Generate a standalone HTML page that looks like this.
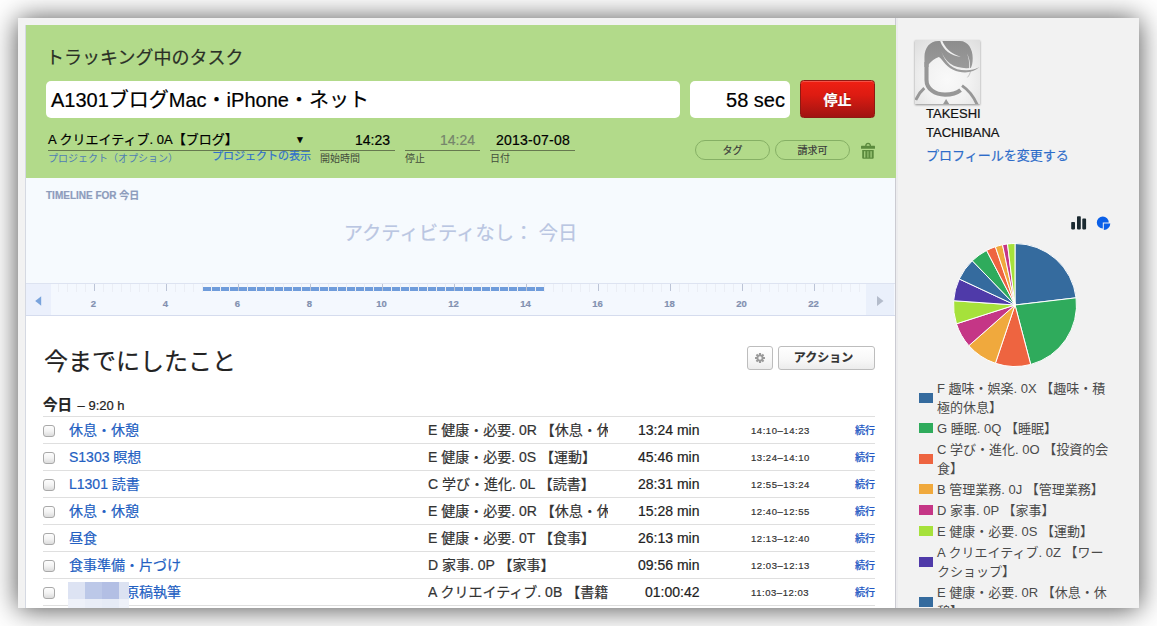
<!DOCTYPE html><html lang="ja"><head><meta charset="utf-8"><title>Toggl</title><style>
*{box-sizing:border-box;margin:0;padding:0}
html,body{width:1157px;height:626px;overflow:hidden;background:#fff}
body{font-family:"Liberation Sans","Noto Sans CJK JP",sans-serif;color:#222;position:relative;-webkit-text-stroke:.2px}
.a{position:absolute;white-space:nowrap}
#win{position:absolute;left:18px;top:18px;width:1121px;height:590px;background:#f2f2f2;box-shadow:0 1px 26px rgba(0,0,0,.7);overflow:hidden}
/* coordinates inside #win are page coords minus 18 -> use inner wrapper shifted */
#pg{position:absolute;left:-18px;top:-18px;width:1157px;height:626px}
#main{position:absolute;left:25px;top:25px;width:870px;height:600px;background:#fff;border-left:1px solid #d5d9e2}
#sep{position:absolute;left:895px;top:18px;width:3px;height:600px;background:#ececee;border-left:1px solid #cbcbd2}
#green{position:absolute;left:26px;top:25px;width:870px;height:153px;background:#b2da8a}
.inp{position:absolute;background:#fff;border-radius:5px;height:37px;top:81px;font-size:20px;line-height:38px;color:#000;white-space:nowrap;overflow:hidden}
.ul{position:absolute;height:1px;background:#66794f;top:150px}
.fld{position:absolute;font-size:14px;line-height:16px;color:#000;text-align:right;white-space:nowrap}
.lbl{position:absolute;font-size:10px;line-height:12px;color:#434c3a;white-space:nowrap;-webkit-text-stroke:0}
.pill{position:absolute;top:140px;height:20px;width:75px;border:1px solid #86b065;border-radius:10px;font-size:10px;line-height:19.5px;text-align:center;color:#3a3a3a}
#tl{position:absolute;left:26px;top:178px;width:869px;height:138px;background:#f6fafe}
#axis{position:absolute;left:26px;top:283px;width:869px;height:33px;background:#f4f8fe;border-top:1px solid #dde3f1;border-bottom:1px solid #d5dcee}
.tk{position:absolute;top:284px;width:1px;height:8px;background:#ebeef5}
.tk.M{height:7px;background:#bcc4d6}
.tn{position:absolute;top:298px;width:30px;text-align:center;font-size:9.5px;line-height:12px;color:#8290b0;font-weight:bold}
.row{position:absolute;left:43px;width:832px;height:27px;border-top:1px solid #dfdfdf}
.cb{position:absolute;left:0;top:8px;width:12px;height:12px;border:1px solid #a9a9a9;border-radius:3px;background:linear-gradient(#fdfdfd,#f3f3f3 50%,#dcdcdc)}
.rt{position:absolute;left:26px;top:0;font-size:14px;line-height:27px;color:#2360c2;white-space:nowrap}
.rp{position:absolute;left:385px;top:0;width:180px;overflow:hidden;font-size:14px;line-height:27px;color:#333;white-space:nowrap}
.rd{position:absolute;left:595px;top:0;font-size:14px;line-height:27px;color:#222;white-space:nowrap}
.rr{position:absolute;left:708px;top:0;font-size:9.5px;letter-spacing:.55px;line-height:27px;color:#333;white-space:nowrap}
.rc{position:absolute;right:0;top:0;font-size:10px;line-height:27px;color:#2459c4;white-space:nowrap;font-weight:500}
.btn{position:absolute;top:346px;height:24px;border:1px solid #bdbdbd;border-radius:3px;background:linear-gradient(#fff,#f7f7f7 60%,#ececec)}
.lg{position:absolute;left:937px;width:176px;font-size:13px;line-height:19px;color:#4a4a4a;-webkit-text-stroke:0;white-space:normal}
.sw{position:absolute;left:919px;width:14px;height:10px}
</style></head><body><div id="win"><div id="pg">
<div id="main"></div><div id="sep"></div>
<div id="green"></div>
<div class="a" style="left:46px;top:46px;font-size:18px;line-height:24px;color:#2a2f26">トラッキング中のタスク</div>
<div class="inp" style="left:46px;width:634px;padding-left:5px">A1301ブログMac・iPhone・ネット</div>
<div class="inp" style="left:690px;width:100px;text-align:right;padding-right:5px">58 sec</div>
<div class="a" style="left:800px;top:80px;width:75px;height:38px;border:1px solid #8e1a12;border-radius:3.5px;box-shadow:inset 0 1px 0 rgba(255,255,255,.22);background:linear-gradient(#f02013,#dc1b12 40%,#a01411);color:#fff;font-weight:bold;font-size:14px;line-height:38px;text-align:center;text-shadow:0 -1px 0 rgba(0,0,0,.3)">停止</div>
<div class="a" style="left:48px;top:132px;font-size:13px;line-height:16px;color:#000">A クリエイティブ. 0A【ブログ】</div>
<div class="a" style="left:295px;top:133px;font-size:10px;line-height:14px;color:#000">▼</div>
<div class="ul" style="left:48px;width:262px"></div>
<div class="lbl" style="left:48px;top:153px;color:#4f7db4">プロジェクト（オプション）</div>
<div class="a" style="left:212px;top:149px;font-size:11px;line-height:14px;color:#2f70cc">プロジェクトの表示</div>
<div class="fld" style="left:320px;top:132px;width:75px;padding-right:5px;color:#000">14:23</div>
<div class="ul" style="left:320px;width:75px"></div>
<div class="lbl" style="left:320px;top:153px">開始時間</div>
<div class="fld" style="left:405px;top:132px;width:75px;padding-right:5px;color:#76856b">14:24</div>
<div class="ul" style="left:405px;width:75px"></div>
<div class="lbl" style="left:405px;top:153px">停止</div>
<div class="fld" style="left:490px;top:132px;width:85px;padding-right:5px;color:#000"><span style="letter-spacing:.25px">2013-07-08</span></div>
<div class="ul" style="left:490px;width:85px"></div>
<div class="lbl" style="left:490px;top:153px">日付</div>
<div class="pill" style="left:695px">タグ</div>
<div class="pill" style="left:775px">請求可</div>
<svg class="a" style="left:861px;top:142px" width="14" height="18" viewBox="0 0 14 18"><g fill="#5b8a3d"><path d="M4.2 4.2V3.6C4.2 2 5.4.8 7.1.8S10 2 10 3.6V4.2H8.6V3.6C8.6 2.7 8 2.2 7.1 2.2S5.6 2.7 5.6 3.6V4.2Z"/><rect x="0" y="3.8" width="14" height="2.9" rx=".5"/><path d="M1.2 8.1H12.7V15.7A1 1 0 0 1 11.7 16.7H2.2A1 1 0 0 1 1.2 15.7Z"/></g><g fill="#a4cf7e"><rect x="3.1" y="9.2" width="1.25" height="6.4"/><rect x="6.3" y="9.2" width="1.25" height="6.4" fill="#93bf70"/><rect x="9.45" y="9.2" width="1.25" height="6.4"/></g></svg>
<div id="tl"></div><div id="axis"></div>
<div class="a" style="left:46px;top:190px;font-size:10px;line-height:12px;font-weight:bold;color:#8d9cbc">TIMELINE FOR 今日</div>
<div class="a" style="left:26px;top:221px;width:869px;text-align:center;font-size:19.3px;line-height:26px;color:#bac6e2">アクティビティなし： 今日</div>
<div class="tk" style="left:58px"></div>
<div class="tk" style="left:67px"></div>
<div class="tk" style="left:76px"></div>
<div class="tk" style="left:85px"></div>
<div class="tk M" style="left:94px"></div>
<div class="tk" style="left:103px"></div>
<div class="tk" style="left:112px"></div>
<div class="tk" style="left:121px"></div>
<div class="tk" style="left:130px"></div>
<div class="tk" style="left:139px"></div>
<div class="tk" style="left:148px"></div>
<div class="tk" style="left:157px"></div>
<div class="tk M" style="left:166px"></div>
<div class="tk" style="left:175px"></div>
<div class="tk" style="left:184px"></div>
<div class="tk" style="left:193px"></div>
<div class="tk" style="left:202px"></div>
<div class="tk" style="left:211px"></div>
<div class="tk" style="left:220px"></div>
<div class="tk" style="left:229px"></div>
<div class="tk M" style="left:238px"></div>
<div class="tk" style="left:247px"></div>
<div class="tk" style="left:256px"></div>
<div class="tk" style="left:265px"></div>
<div class="tk" style="left:274px"></div>
<div class="tk" style="left:283px"></div>
<div class="tk" style="left:292px"></div>
<div class="tk" style="left:301px"></div>
<div class="tk M" style="left:310px"></div>
<div class="tk" style="left:319px"></div>
<div class="tk" style="left:328px"></div>
<div class="tk" style="left:337px"></div>
<div class="tk" style="left:346px"></div>
<div class="tk" style="left:355px"></div>
<div class="tk" style="left:364px"></div>
<div class="tk" style="left:373px"></div>
<div class="tk M" style="left:382px"></div>
<div class="tk" style="left:391px"></div>
<div class="tk" style="left:400px"></div>
<div class="tk" style="left:409px"></div>
<div class="tk" style="left:418px"></div>
<div class="tk" style="left:427px"></div>
<div class="tk" style="left:436px"></div>
<div class="tk" style="left:445px"></div>
<div class="tk M" style="left:454px"></div>
<div class="tk" style="left:463px"></div>
<div class="tk" style="left:472px"></div>
<div class="tk" style="left:481px"></div>
<div class="tk" style="left:490px"></div>
<div class="tk" style="left:499px"></div>
<div class="tk" style="left:508px"></div>
<div class="tk" style="left:517px"></div>
<div class="tk M" style="left:526px"></div>
<div class="tk" style="left:535px"></div>
<div class="tk" style="left:544px"></div>
<div class="tk" style="left:553px"></div>
<div class="tk" style="left:562px"></div>
<div class="tk" style="left:571px"></div>
<div class="tk" style="left:580px"></div>
<div class="tk" style="left:589px"></div>
<div class="tk M" style="left:598px"></div>
<div class="tk" style="left:607px"></div>
<div class="tk" style="left:616px"></div>
<div class="tk" style="left:625px"></div>
<div class="tk" style="left:634px"></div>
<div class="tk" style="left:643px"></div>
<div class="tk" style="left:652px"></div>
<div class="tk" style="left:661px"></div>
<div class="tk M" style="left:670px"></div>
<div class="tk" style="left:679px"></div>
<div class="tk" style="left:688px"></div>
<div class="tk" style="left:697px"></div>
<div class="tk" style="left:706px"></div>
<div class="tk" style="left:715px"></div>
<div class="tk" style="left:724px"></div>
<div class="tk" style="left:733px"></div>
<div class="tk M" style="left:742px"></div>
<div class="tk" style="left:751px"></div>
<div class="tk" style="left:760px"></div>
<div class="tk" style="left:769px"></div>
<div class="tk" style="left:778px"></div>
<div class="tk" style="left:787px"></div>
<div class="tk" style="left:796px"></div>
<div class="tk" style="left:805px"></div>
<div class="tk M" style="left:814px"></div>
<div class="tk" style="left:823px"></div>
<div class="tk" style="left:832px"></div>
<div class="tk" style="left:841px"></div>
<div class="tk" style="left:850px"></div>
<div class="tk" style="left:859px"></div>
<div class="tn" style="left:78.5px">2</div>
<div class="tn" style="left:150.5px">4</div>
<div class="tn" style="left:222.5px">6</div>
<div class="tn" style="left:294.5px">8</div>
<div class="tn" style="left:366.5px">10</div>
<div class="tn" style="left:438.5px">12</div>
<div class="tn" style="left:510.5px">14</div>
<div class="tn" style="left:582.5px">16</div>
<div class="tn" style="left:654.5px">18</div>
<div class="tn" style="left:726.5px">20</div>
<div class="tn" style="left:798.5px">22</div>
<div class="a" style="left:203px;top:287px;width:341px;height:4px;background:repeating-linear-gradient(90deg,#6f9cdb 0,#6f9cdb 8px,transparent 8px,transparent 9px)"></div>
<div class="a" style="left:26px;top:284px;width:25px;height:31px;background:#ebf0fc"></div>
<div class="a" style="left:866px;top:284px;width:28px;height:31px;background:#eaf0fb"></div>
<svg class="a" style="left:35px;top:296px" width="7" height="10"><path d="M6.2 .3L.2 5l6 4.7z" fill="#79a3dc"/></svg>
<svg class="a" style="left:877px;top:296px" width="7" height="10"><path d="M0 0l6.5 5L0 10z" fill="#b4bccb"/></svg>
<div class="a" style="left:44px;top:346px;font-size:24px;line-height:32px;color:#222">今までにしたこと</div>
<div class="btn" style="left:747px;width:26px"><svg style="position:absolute;left:7px;top:6px" width="10" height="10" viewBox="-6 -6 12 12"><g fill="#9a9a9a"><rect x="-1.3" y="-6" width="2.6" height="12" rx=".4" transform="rotate(0)"/><rect x="-1.3" y="-6" width="2.6" height="12" rx=".4" transform="rotate(45)"/><rect x="-1.3" y="-6" width="2.6" height="12" rx=".4" transform="rotate(90)"/><rect x="-1.3" y="-6" width="2.6" height="12" rx=".4" transform="rotate(135)"/><circle r="4.2"/></g><circle r="2" fill="#f6f6f6"/></svg></div>
<div class="btn" style="left:778px;width:97px;font-size:12px;line-height:22px;font-weight:bold;color:#333;text-align:center;padding-right:6px">アクション</div>
<div class="a" style="left:43px;top:395px;font-size:13px;line-height:20px;color:#222"><b style="font-size:14.5px;margin-right:2px">今日</b> – 9:20 h</div>
<div class="row" style="top:416px"><div class="cb"></div><div class="rt">休息・休憩</div><div class="rp">E 健康・必要. 0R 【休息・休憩】</div><div class="rd" style="">13:24 min</div><div class="rr">14:10–14:23</div><div class="rc">続行</div></div>
<div class="row" style="top:443px"><div class="cb"></div><div class="rt">S1303 瞑想</div><div class="rp">E 健康・必要. 0S 【運動】</div><div class="rd" style="">45:46 min</div><div class="rr">13:24–14:10</div><div class="rc">続行</div></div>
<div class="row" style="top:470px"><div class="cb"></div><div class="rt">L1301 読書</div><div class="rp">C 学び・進化. 0L 【読書】</div><div class="rd" style="">28:31 min</div><div class="rr">12:55–13:24</div><div class="rc">続行</div></div>
<div class="row" style="top:497px"><div class="cb"></div><div class="rt">休息・休憩</div><div class="rp">E 健康・必要. 0R 【休息・休憩】</div><div class="rd" style="">15:28 min</div><div class="rr">12:40–12:55</div><div class="rc">続行</div></div>
<div class="row" style="top:524px"><div class="cb"></div><div class="rt">昼食</div><div class="rp">E 健康・必要. 0T 【食事】</div><div class="rd" style="">26:13 min</div><div class="rr">12:13–12:40</div><div class="rc">続行</div></div>
<div class="row" style="top:551px"><div class="cb"></div><div class="rt">食事準備・片づけ</div><div class="rp">D 家事. 0P 【家事】</div><div class="rd" style="">09:56 min</div><div class="rr">12:03–12:13</div><div class="rc">続行</div></div>
<div class="row" style="top:578px"><div class="cb"></div><div class="rt">　　　　原稿執筆</div><div class="rp">A クリエイティブ. 0B 【書籍執筆】</div><div class="rd" style="left:602px">01:00:42</div><div class="rr">11:03–12:03</div><div class="rc">続行</div></div>
<div class="row" style="top:605px"></div>
<div class="a" style="left:68px;top:582px;width:17px;height:17px;background:#dde3f3"></div>
<div class="a" style="left:85px;top:582px;width:17px;height:17px;background:#bcc8e8"></div>
<div class="a" style="left:102px;top:582px;width:17px;height:17px;background:#b3bfe4"></div>
<div class="a" style="left:119px;top:582px;width:10px;height:17px;background:#dce2f2"></div>
<div class="a" style="left:68px;top:599px;width:17px;height:9px;background:#eef1f9"></div>
<div class="a" style="left:85px;top:599px;width:17px;height:9px;background:#e9edf7"></div>
<div class="a" style="left:102px;top:599px;width:17px;height:9px;background:#e6ebf6"></div>
<div class="a" style="left:119px;top:599px;width:10px;height:9px;background:#eef1f9"></div>
<div class="a" style="left:915px;top:40px;width:65px;height:64px;background:radial-gradient(ellipse 75% 80% at 50% 62%,#f9f9f9 0,#f2f2f2 45%,#dedede 100%);box-shadow:0 1px 2px rgba(0,0,0,.4);overflow:hidden"><svg width="65" height="64" viewBox="0 0 65 64"><defs><linearGradient id="hg" x1="0" y1="0" x2="0" y2="1"><stop offset="0" stop-color="#8d8d8d"/><stop offset="1" stop-color="#9c9c9c"/></linearGradient></defs><g fill="none" stroke="#979797"><path d="M11.5 22V40C11.5 49 20 54.6 30 54.6C36.5 54.6 42 53 45.6 50.1" stroke-width="4.1"/><path d="M47 45.6C53.5 50 58.5 56 62.3 65" stroke-width="2.9"/><path d="M9.3 48.1C5.4 51.4 2.6 55.6 .8 60" stroke-width="2.9"/><path d="M55.6 30C55.4 33 54.2 35.6 52.4 37.4" stroke-width=".7" stroke="#adadad"/></g><path d="M9.45 27V17C9.45 8 15 1.05 23 1.05H45C53 1.05 57.7 9 57.7 18C57.7 23 57 26 55.5 28.7C58.6 28.7 61.6 28.2 64.4 27.1C61 30.6 55.5 32.4 50 32.4C42 32.4 33.5 29 28.2 21.5C27 19.6 25.4 17.8 23.8 16.9C20 18 16 21 13.55 24.6V27Z" fill="url(#hg)"/><g fill="#f0f0f0"><path d="M25.2 1.05H27.4C29.5 7 36 14.3 45.8 16.7C36 16 28 10 25.2 1.05Z"/><path d="M26.3 11.3C28 16 31 20.5 35 23.6C40 27.2 46 28.3 51.8 28.2C56 28.1 60 27.8 64.2 27C60 29.2 56 30.2 51.8 30.3C45 30.4 39.4 29 35 25.2C31 21.8 28.2 17 26.3 11.3Z"/><path d="M52 13.6C54.2 17.5 55.4 22.5 54.9 28.4L54.1 28.4C54.6 22.8 53.6 17.8 52 13.6Z"/></g><path d="M27.8 64.5L31.1 59L34.5 64.5Z" fill="#979797"/></svg></div>
<div class="a" style="left:926px;top:104px;font-size:13px;line-height:19px;color:#111">TAKESHI<br>TACHIBANA</div>
<div class="a" style="left:926px;top:146px;font-size:13px;line-height:19px;color:#2d6cc9">プロフィールを変更する</div>
<svg class="a" style="left:1070px;top:215px" width="44" height="16" viewBox="0 0 44 16"><g fill="#1b2a31"><rect x="1.2" y="7" width="3.8" height="7.4" rx=".8"/><rect x="7" y="1.2" width="3.8" height="13.2" rx=".8"/><rect x="12.3" y="3.6" width="3.8" height="10.8" rx=".8"/></g><g fill="#0b60e8"><path d="M32.8 7.5m6 0a6 6 0 1 0-6 6v-6z" /><path d="M33.8 8.4h6.5a6.5 6.5 0 0 1-6.5 6.5z"/></g></svg>
<svg class="a" style="left:0;top:0" width="1157" height="626"><path d="M1015 305L1015.00 243.50A61.5 61.5 0 0 1 1076.08 297.82Z" fill="#356b9e" stroke="#fff" stroke-width="1" stroke-linejoin="round"/><path d="M1015 305L1076.08 297.82A61.5 61.5 0 0 1 1030.71 364.46Z" fill="#2fab5c" stroke="#fff" stroke-width="1" stroke-linejoin="round"/><path d="M1015 305L1030.71 364.46A61.5 61.5 0 0 1 995.38 363.29Z" fill="#ee6440" stroke="#fff" stroke-width="1" stroke-linejoin="round"/><path d="M1015 305L995.38 363.29A61.5 61.5 0 0 1 968.87 345.67Z" fill="#f0a93d" stroke="#fff" stroke-width="1" stroke-linejoin="round"/><path d="M1015 305L968.87 345.67A61.5 61.5 0 0 1 956.44 323.80Z" fill="#c53686" stroke="#fff" stroke-width="1" stroke-linejoin="round"/><path d="M1015 305L956.44 323.80A61.5 61.5 0 0 1 953.65 300.71Z" fill="#a6e13b" stroke="#fff" stroke-width="1" stroke-linejoin="round"/><path d="M1015 305L953.65 300.71A61.5 61.5 0 0 1 959.26 279.01Z" fill="#4f3aa9" stroke="#fff" stroke-width="1" stroke-linejoin="round"/><path d="M1015 305L959.26 279.01A61.5 61.5 0 0 1 972.28 260.76Z" fill="#356b9e" stroke="#fff" stroke-width="1" stroke-linejoin="round"/><path d="M1015 305L972.28 260.76A61.5 61.5 0 0 1 986.60 250.45Z" fill="#2fab5c" stroke="#fff" stroke-width="1" stroke-linejoin="round"/><path d="M1015 305L986.60 250.45A61.5 61.5 0 0 1 995.38 246.71Z" fill="#ee6440" stroke="#fff" stroke-width="1" stroke-linejoin="round"/><path d="M1015 305L995.38 246.71A61.5 61.5 0 0 1 1002.53 244.78Z" fill="#f0a93d" stroke="#fff" stroke-width="1" stroke-linejoin="round"/><path d="M1015 305L1002.53 244.78A61.5 61.5 0 0 1 1007.51 243.96Z" fill="#c53686" stroke="#fff" stroke-width="1" stroke-linejoin="round"/><path d="M1015 305L1007.51 243.96A61.5 61.5 0 0 1 1015.00 243.50Z" fill="#a6e13b" stroke="#fff" stroke-width="1" stroke-linejoin="round"/></svg>
<div class="lg" style="top:379px">F 趣味・娯楽. 0X 【趣味・積極的休息】</div>
<div class="sw" style="top:393px;background:#356b9e"></div>
<div class="lg" style="top:419px">G 睡眠. 0Q 【睡眠】</div>
<div class="sw" style="top:423px;background:#2fab5c"></div>
<div class="lg" style="top:440px">C 学び・進化. 0O 【投資的会食】</div>
<div class="sw" style="top:454px;background:#ee6440"></div>
<div class="lg" style="top:480px">B 管理業務. 0J 【管理業務】</div>
<div class="sw" style="top:484px;background:#f0a93d"></div>
<div class="lg" style="top:501px">D 家事. 0P 【家事】</div>
<div class="sw" style="top:505px;background:#c53686"></div>
<div class="lg" style="top:522px">E 健康・必要. 0S 【運動】</div>
<div class="sw" style="top:526px;background:#a6e13b"></div>
<div class="lg" style="top:543px">A クリエイティブ. 0Z 【ワークショップ】</div>
<div class="sw" style="top:557px;background:#4f3aa9"></div>
<div class="lg" style="top:583px">E 健康・必要. 0R 【休息・休憩】</div>
<div class="sw" style="top:597px;background:#356b9e"></div>
</div></div></body></html>
